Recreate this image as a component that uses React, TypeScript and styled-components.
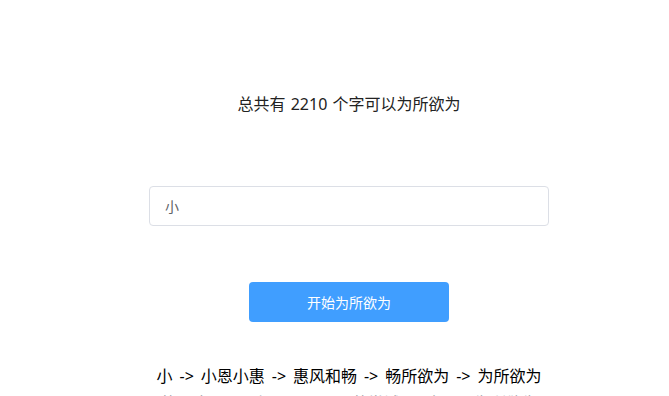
import React, { useState } from "react";
import styled, { createGlobalStyle } from "styled-components";

const Global = createGlobalStyle`
  html, body { margin: 0; padding: 0; background: #fff; }
  body { font-family: "Noto Sans", "Noto Sans CJK SC", sans-serif; overflow: hidden; }
`;

const Page = styled.div`
  display: flex;
  flex-direction: column;
  align-items: center;
  padding: 92px 0 0 29px;
  box-sizing: border-box;
  width: 669px;
`;

const Title = styled.div`
  font-size: 16px;
  line-height: 24px;
  color: #222;
  word-spacing: 1px;
`;

const Input = styled.input`
  margin-top: 70px;
  width: 400px;
  height: 40px;
  box-sizing: border-box;
  border: 1px solid #dcdfe6;
  border-radius: 4px;
  padding: 0 15px;
  font-family: inherit;
  font-size: 14px;
  color: #606266;
  outline: none;
`;

const Button = styled.button`
  margin-top: 56px;
  width: 200px;
  height: 40px;
  border: none;
  border-radius: 4px;
  background: #409eff;
  color: #fff;
  font-family: inherit;
  font-size: 14px;
  cursor: pointer;
`;

const Result = styled.div`
  margin-top: 42px;
  font-size: 16px;
  line-height: 24px;
  color: #000;
  text-align: center;
  word-spacing: 2.8px;
`;

const Note = styled.div`
  margin-top: 3px;
  font-size: 16px;
  line-height: 24px;
  color: #909399;
  text-align: center;
`;

export default function App() {
  const [v, setV] = useState("小");
  return (
    <>
      <Global />
      <Page>
        <Title>总共有 2210 个字可以为所欲为</Title>
        <Input value={v} onChange={(e) => setV(e.target.value)} />
        <Button>开始为所欲为</Button>
        <Result>小 -&gt; 小恩小惠 -&gt; 惠风和畅 -&gt; 畅所欲为 -&gt; 为所欲为</Result>
        <Note>共 4 步 -&gt; 用时 23 ms -&gt; 一共尝试 38 次可以为所欲为</Note>
      </Page>
    </>
  );
}
